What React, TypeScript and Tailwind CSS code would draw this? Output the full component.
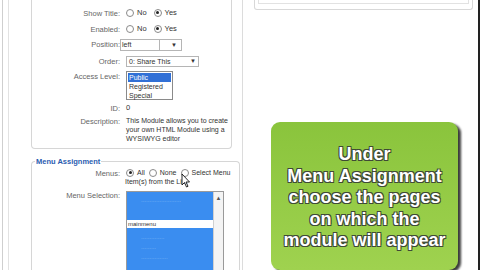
const Radio = ({ checked, label }: { checked?: boolean; label: string }) => (
  <span className="flex items-center gap-[3px] whitespace-nowrap">
    <span className="w-[8px] h-[8px] rounded-full border border-[#8a8a8a] bg-white flex items-center justify-center shrink-0">
      {checked && <span className="w-[3px] h-[3px] rounded-full bg-[#222]" />}
    </span>
    <span>{label}</span>
  </span>
);

const Row = ({ label, h, children }: { label: string; h: string; children?: React.ReactNode }) => (
  <div className={`flex ${h}`}>
    <div className="w-[88px] shrink-0 text-right text-[#666] pt-[1px]">{label}</div>
    <div className="pl-[6px] text-[#333]">{children}</div>
  </div>
);

export default function App() {
  return (
    <div className="w-[480px] h-[270px] overflow-hidden bg-white flex font-['Liberation_Sans',Arial,sans-serif] text-[7.5px] leading-[9px] border-r-2 border-[#222]">
      {/* left column */}
      <div className="w-[243px] shrink-0 flex border-r border-[#dcdcdc]">
        <div className="w-[3px] border-r border-[#cfcfcf]" />
        <div className="w-[6px] border-r border-[#e2e2e2]" />
        <div className="flex-1 pl-[22px] flex flex-col">
          {/* details fieldset */}
          <div className="w-[201px] h-[150px] border-x border-b border-[#d6d6d6] rounded-b-[4px] pt-[8px] flex flex-col">
            <Row label="Show Title:" h="h-[16px]">
              <div className="flex gap-[7px] items-center"><Radio label="No" /><Radio checked label="Yes" /></div>
            </Row>
            <Row label="Enabled:" h="h-[15px]">
              <div className="flex gap-[7px] items-center"><Radio label="No" /><Radio checked label="Yes" /></div>
            </Row>
            <Row label="Position:" h="h-[17px]">
              <div className="flex -ml-[6px] h-[12px]">
                <div className="w-[40px] border border-[#b5b5b5] bg-white text-[7px] leading-[10px] pl-[1px]">left</div>
                <div className="w-[22px] border border-l-0 border-[#b5b5b5] flex items-center justify-end pr-[4px] text-[6px]">▼</div>
              </div>
            </Row>
            <Row label="Order:" h="h-[15px]">
              <div className="w-[73px] h-[11px] border border-[#b5b5b5] flex items-center justify-between px-[2px] text-[7px]">
                <span>0: Share This</span><span className="text-[6px]">▼</span>
              </div>
            </Row>
            <Row label="Access Level:" h="h-[32px]">
              <div className="w-[47px] h-[29px] border border-[#8a8a8a] text-[7px] leading-[9px] p-[1px]">
                <div className="bg-[#3170d6] text-white px-[1px]">Public</div>
                <div className="px-[1px]">Registered</div>
                <div className="px-[1px]">Special</div>
              </div>
            </Row>
            <Row label="ID:" h="h-[13px]">0</Row>
            <Row label="Description:" h="h-[30px]">
              <div className="whitespace-nowrap text-[7px] leading-[9px]">
                <div>This Module allows you to create</div>
                <div>your own HTML Module using a</div>
                <div>WYSIWYG editor</div>
              </div>
            </Row>
          </div>
          {/* menu assignment fieldset */}
          <div className="mt-[12px] w-[209px] flex-1 border-x border-t border-[#d6d6d6] rounded-t-[4px] relative">
            <div className="absolute -top-[5px] left-[3px] bg-white px-[1px] text-[#2a5db0] font-bold">Menu Assignment</div>
            <div className="pt-[6px] flex flex-col">
              <Row label="Menus:" h="h-[22px]">
                <div className="text-[7px]">
                  <div className="flex gap-[4px] items-center"><Radio checked label="All" /><Radio label="None" /><Radio label="Select Menu" /></div>
                  <div className="-ml-[1px] whitespace-nowrap">Item(s) from the List</div>
                </div>
              </Row>
              <Row label="Menu Selection:" h="h-[80px]">
                <div className="w-[98px] h-[80px] mt-[1px] border border-[#9a9a9a] flex bg-white">
                  <div className="flex-1 flex flex-col">
                    <div className="h-[28px] bg-[#3a8df0] text-[#8cc0f7] text-[6px] pl-[14px] pt-[4px]">........................</div>
                    <div className="h-[8px] bg-white text-[6px] leading-[8px] text-[#333] pl-[1px]">mainmenu</div>
                    <div className="flex-1 bg-[#3a8df0] text-[#8cc0f7] text-[6px] pl-[14px] pt-[4px] leading-[10px]">
                      <div>..............</div><div>.........</div><div>................</div>
                    </div>
                  </div>
                  <div className="w-[10px] border-l border-[#d0d0d0] bg-[#f4f4f4] flex justify-center pt-[2px] text-[6px] text-[#555]">▲</div>
                </div>
              </Row>
            </div>
            <svg className="absolute left-[149px] top-[11px]" width="10" height="15" viewBox="0 0 10 15">
              <path d="M1 1 L1 12 L3.5 9.5 L5.5 14 L7 13.3 L5 9 L8.5 9 Z" fill="white" stroke="#111" strokeWidth="0.9" />
            </svg>
          </div>
        </div>
      </div>
      {/* right column */}
      <div className="flex-1 flex flex-col">
        <div className="ml-[11px] mr-[5px] h-[10px] border-x border-b border-[#d8d8d8] rounded-b-[3px] px-[3px]">
          <div className="h-[4px] border-x border-b border-[#e2e2e2]" />
        </div>
        <div className="mt-[112px] ml-[28px] w-[187px] flex-1 relative">
          <div className="absolute inset-0 translate-x-[3px] translate-y-[2px] rounded-[9px] bg-[#3d3d3d] blur-[1px]" />
          <div className="relative h-full rounded-[9px] bg-gradient-to-b from-[#8ac43c] to-[#9fd24f] pt-[22px] text-center text-white font-bold font-['Liberation_Sans',Arial,sans-serif] text-[18px] leading-[21.5px] [text-shadow:1px_1px_0_#3f4a36,-1px_-1px_0_#3f4a36,1px_-1px_0_#3f4a36,-1px_1px_0_#3f4a36]">
            <div>Under</div>
            <div>Menu Assignment</div>
            <div>choose the pages</div>
            <div>on which the</div>
            <div>module will appear</div>
          </div>
        </div>
      </div>
    </div>
  );
}
